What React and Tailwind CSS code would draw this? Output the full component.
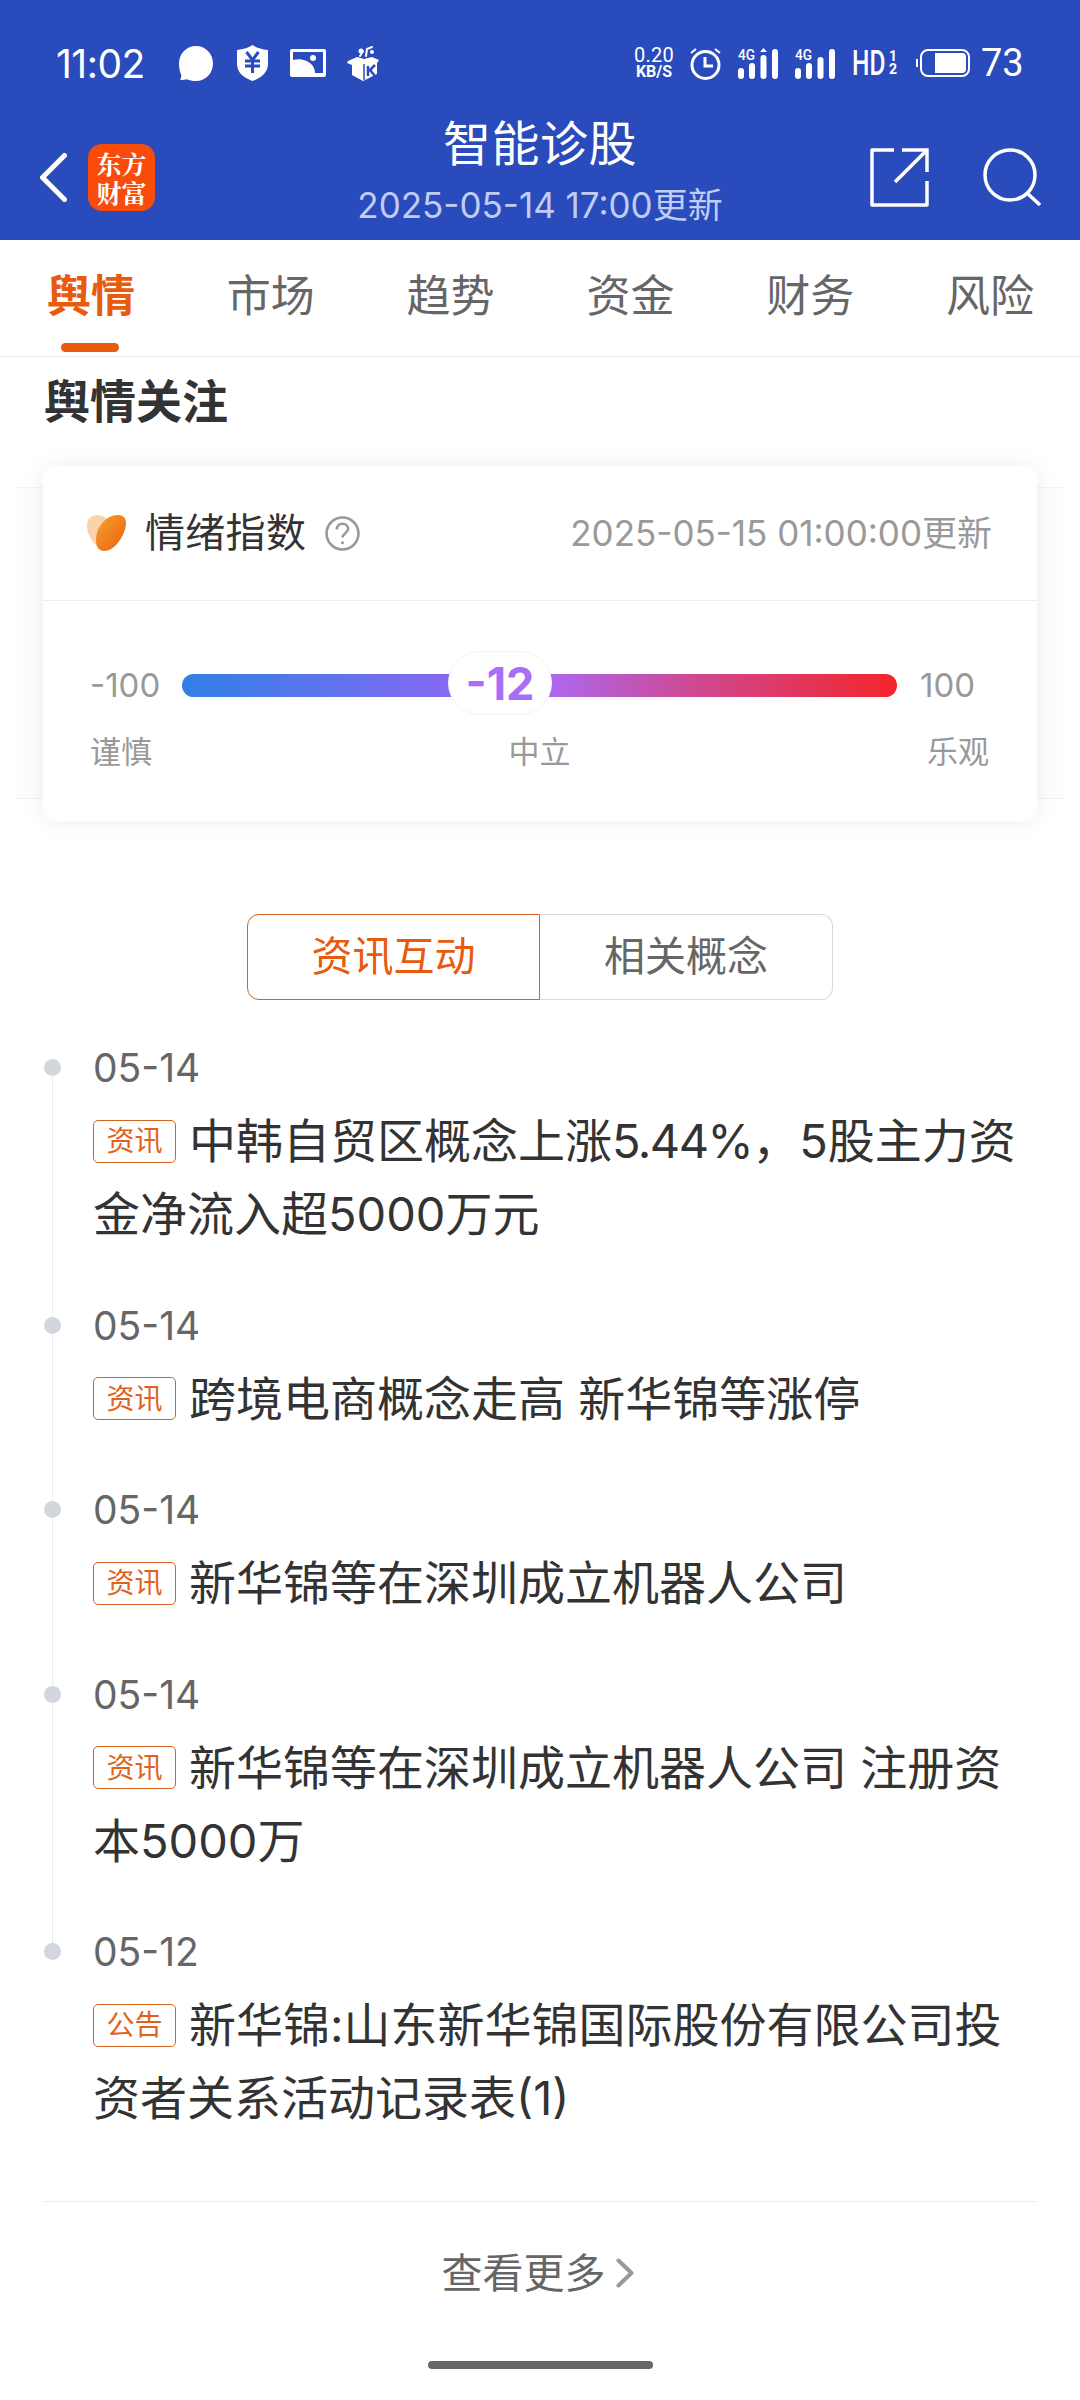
import React from 'react';

const font = "font-['Inter','Noto_Sans_CJK_SC',sans-serif]";

const tabs = ['舆情', '市场', '趋势', '资金', '财务', '风险'];

const news = [
  {
    date: '05-14',
    tag: '资讯',
    text: (
      <>
        中韩自贸区概念上涨<span className="tracking-[-1.500px]">5.44%</span>，5股主力资金净流入超5000万元
      </>
    ),
  },
  { date: '05-14', tag: '资讯', text: '跨境电商概念走高 新华锦等涨停' },
  { date: '05-14', tag: '资讯', text: '新华锦等在深圳成立机器人公司' },
  { date: '05-14', tag: '资讯', text: '新华锦等在深圳成立机器人公司 注册资本5000万' },
  { date: '05-12', tag: '公告', text: '新华锦:山东新华锦国际股份有限公司投资者关系活动记录表(1)' },
];

const Signal = ({ up }) => (
  <svg width="41" height="32" viewBox="0 0 41 32" fill="white">
    <text x="0" y="13" fontSize="15" fontWeight="500" fontFamily="Roboto" textLength="17" lengthAdjust="spacingAndGlyphs">4G</text>
    <rect x="0" y="21" width="6" height="11" rx="3" />
    <rect x="11" y="16" width="6" height="16" rx="3" />
    {up && <path d="M25.500 1l3.500 4h-7z" />}
    <rect x="22.500" y={up ? 8 : 10} width="6" height={up ? 24 : 22} rx="3" />
    <rect x="34" y="2" width="6" height="30" rx="3" />
  </svg>
);

const StatusBar = () => (
  <div className="h-[80px] pt-[47px] pl-[56px] pr-[60px] flex items-start justify-between text-white">
    <div className="flex items-center h-[32px]">
      <span className="text-[39px] leading-none w-[89px] whitespace-nowrap tracking-[-0.500px]">11:02</span>
      <svg className="ml-[34px]" width="34" height="35" viewBox="0 0 34 35" fill="white">
        <path d="M17 0C26.400 0 34 7.600 34 17.500S26.400 35 17 35c-3.500 0-6.500-.6-9.500-1.800-2 .6-4 .8-6.500.6 1-1.500 1.500-3 1.200-5C.8 26 0 21.700 0 17.500 0 7.600 7.600 0 17 0z" />
      </svg>
      <svg className="ml-[24px]" width="31" height="36" viewBox="0 0 31 36">
        <path d="M15.500 0c3.500 2.500 9 4.500 15.500 5v14c0 8-6 13.500-15.500 17C6 32.500 0 27 0 19V5c6.500-.5 12-2.500 15.500-5z" fill="white" />
        <path d="M9.500 7l6 8 6-8M8 16h15M8 21h15M15.500 15v13" stroke="#294bbc" strokeWidth="3" fill="none" />
      </svg>
      <svg className="ml-[22px]" width="36" height="28" viewBox="0 0 36 28">
        <rect width="36" height="28" rx="2" fill="white" />
        <path d="M3 3h30v21h-8c0-3-1-5-2.500-7.500C18 11 10 9 3 11z" fill="#294bbc" />
        <circle cx="23" cy="9" r="3" fill="white" />
      </svg>
      <svg className="ml-[21px]" width="33" height="36" viewBox="0 0 33 36">
        <path d="M1 16l9-4 7 2 8-2 7 3-2 3v11l-14 7-11-6V20l-5-2z" fill="white" />
        <path d="M17 19v16" stroke="#294bbc" strokeWidth="1.500" />
        <path d="M21 21v10M28 20l-5 5 5 6" stroke="#294bbc" strokeWidth="2.500" fill="none" />
        <path d="M13 11l3-5M19 11l1-7 5-2" stroke="white" strokeWidth="2" strokeLinecap="round" fill="none" />
        <circle cx="14" cy="6" r="2.500" fill="white" />
        <circle cx="25" cy="7" r="2" fill="white" />
      </svg>
    </div>
    <div className="flex items-center h-[32px]">
      <div className="flex flex-col items-center w-[42px] font-['Roboto',sans-serif]">
        <span className="text-[20px] leading-[16px] tracking-[0.300px]">0.20</span>
        <span className="text-[16px] leading-[15px] font-bold mt-[1px]">KB/S</span>
      </div>
      <svg className="ml-[14px]" width="33" height="33" viewBox="0 0 33 33" fill="none" stroke="white" strokeWidth="3">
        <circle cx="16.500" cy="18" r="13.500" />
        <path d="M16 10v9h8" />
        <path d="M2 6l5-4M31 6l-5-4" strokeWidth="2" />
      </svg>
      <div className="ml-[16px] h-[32px]"><Signal up /></div>
      <div className="ml-[16px] h-[32px]"><Signal /></div>
      <div className="ml-[16px] w-[45px] flex items-center font-['Roboto',sans-serif]">
        <span className="text-[35px] leading-none font-medium scale-x-[0.7] origin-left w-[37px]">HD</span>
        <span className="flex flex-col items-center text-[14px] leading-[13px] font-bold">
          <span>1</span>
          <span>2</span>
        </span>
      </div>
      <div className="ml-[19px] flex items-center">
        <span className="w-[2px] h-[8px] bg-white mr-[2px]" />
        <div className="w-[50px] h-[28px] rounded-[8px] border-2 border-white p-[2px] pl-[13px]">
          <div className="h-full w-full bg-white rounded-r-[4px]" />
        </div>
      </div>
      <span className="ml-[11px] w-[39px] text-[38px] leading-none font-['Roboto',sans-serif]">73</span>
    </div>
  </div>
);

const Header = () => (
  <header className="bg-[#294bbc] h-[240px]">
    <StatusBar />
    <div className="relative h-[160px] text-white">
      <div className="flex flex-col items-center pt-[36px]">
        <span className="text-[48px] leading-[56px] tracking-[0.500px]">智能诊股</span>
        <span className="text-[35px] leading-[44px] text-[#bfcdf2] mt-[11px]">2025-05-14 17:00更新</span>
      </div>
      <div className="absolute left-[40px] top-[64px] flex items-center gap-[21px]">
        <svg width="27" height="49" viewBox="0 0 27 49" fill="none" stroke="white" strokeWidth="5" strokeLinecap="round" strokeLinejoin="round">
          <path d="M24.500 2.500L2.500 24.500l22 22" />
        </svg>
        <div className="w-[67px] h-[67px] rounded-[14px] bg-[#f94b0a] flex items-center justify-center">
          <span className="text-[25px] leading-[29px] font-bold text-white text-center font-['Noto_Serif_CJK_SC','Noto_Sans_CJK_SC',sans-serif] w-[52px]">东方财富</span>
        </div>
      </div>
      <div className="absolute right-[39px] top-[68px] flex items-start gap-[54px]">
        <svg width="59" height="59" viewBox="0 0 59 59" fill="none" stroke="white" strokeWidth="3.500">
          <path d="M24 2H2v55h55V33" strokeLinejoin="round" />
          <path d="M32 2h25v22" />
          <path d="M57 2L25 34" />
        </svg>
        <svg width="58" height="58" viewBox="0 0 58 58" fill="none" stroke="white" strokeWidth="3.500">
          <circle cx="27" cy="27" r="25" />
          <path d="M44 45l13 12" />
        </svg>
      </div>
    </div>
  </header>
);

const Tabs = () => (
  <nav className="h-[117px] border-b border-[#ececec] flex justify-between pl-[47px] pr-[46px]">
    {tabs.map((tab, i) => (
      <div key={tab} className="relative pt-[26px]">
        <span className={`text-[44px] leading-[60px] ${i === 0 ? 'font-bold text-[#e85a0c]' : 'text-[#666666]'}`}>{tab}</span>
        {i === 0 && <div className="absolute left-[14px] bottom-[4px] w-[58px] h-[9px] rounded-full bg-[#e85a0c]" />}
      </div>
    ))}
  </nav>
);

const SentimentCard = () => (
  <div className="mx-[15px] mt-[58px] h-[312px] border-y border-[#f3f3f3] bg-[#fdfdfd]">
    <section className="mx-[28px] -mt-[22px] h-[355px] bg-white rounded-[14px] shadow-[0_0_24px_rgba(0,0,0,0.07)]">
      <div className="h-[135px] flex items-center justify-between pl-[44px] pr-[45px] border-b border-[#eeeeee]">
        <div className="flex items-center">
          <svg width="39" height="36" viewBox="0 0 39 36">
            <defs>
              <linearGradient id="leaf" x1="0" y1="0" x2="1" y2="1">
                <stop offset="0" stopColor="#f5a22e" />
                <stop offset="1" stopColor="#ec5f0c" />
              </linearGradient>
            </defs>
            <path d="M10 0C4 0 0 4 0 11c0 9 7 19 15 25 4 0 8-2 10-6L22 6C19 2 15 0 10 0z" fill="#fbd3a9" />
            <path d="M31 0C19 0 9 12 9 25c0 7 3 11 8 11C29 36 39 18 39 8c0-5-3-8-8-8z" fill="url(#leaf)" />
          </svg>
          <span className="ml-[19px] text-[40px] tracking-[0.300px] leading-none text-[#333333]">情绪指数</span>
          <svg className="ml-[19px]" width="35" height="35" viewBox="0 0 34 34" fill="none" stroke="#999999" strokeWidth="2.500">
            <circle cx="17" cy="17" r="15.500" />
            <path d="M11.500 13c0-3.500 2.500-5.500 5.500-5.500s5.500 2 5.500 5c0 4-5.500 4.500-5.500 8.500" />
            <circle cx="17" cy="26" r="1.500" fill="#999999" stroke="none" />
          </svg>
        </div>
        <span className="text-[35px] leading-none text-[#999999]">2025-05-15 01:00:00更新</span>
      </div>
      <div className="pt-[66px] pl-[47px] pr-[48px]">
        <div className="flex items-center h-[37px]">
          <span className="w-[92px] text-[33px] text-[#999999] leading-none">-100</span>
          <div className="relative w-[715px] h-[23px] shrink-0 rounded-full bg-[linear-gradient(90deg,#3080e4_0%,#8c68f2_40%,#a96af5_50%,#cf4890_72%,#f3252a_100%)]">
            <div className="absolute left-[266px] -top-[23px] w-[104px] h-[64px] rounded-full bg-white border border-[#f4f4f4] flex items-center justify-center">
              <span className="text-[45px] leading-none font-bold text-[#a86ef7]">-12</span>
            </div>
          </div>
          <span className="ml-[23px] text-[33px] text-[#999999] leading-none">100</span>
        </div>
        <div className="flex justify-between mt-[28px] text-[31px] leading-[40px] text-[#999999]">
          <span>谨慎</span>
          <span>中立</span>
          <span>乐观</span>
        </div>
      </div>
    </section>
  </div>
);

const Switcher = () => (
  <div className="mt-[115px] flex justify-center">
    <div className="flex w-[586px] h-[86px] text-[41px]">
      <div className="w-[293px] flex items-center justify-center rounded-l-[12px] border border-[#d2641f] text-[#e85a0c]">资讯互动</div>
      <div className="flex-1 flex items-center justify-center rounded-r-[12px] border border-l-0 border-[#d9d9d9] text-[#666666]">相关概念</div>
    </div>
  </div>
);

const NewsItem = ({ item, last }) => (
  <li className="relative pl-[50px] pb-[53.500px]">
    <span className="absolute left-[1px] top-[13px] w-[17px] h-[17px] rounded-full bg-[#d2d6dd]" />
    {!last && <span className="absolute left-[9px] top-[30px] -bottom-[13px] w-px bg-[#e9ebef]" />}
    <div className="text-[39px] leading-[44px] text-[#666666]">{item.date}</div>
    <p className="mt-[14px] text-[47px] leading-[73px] text-[#333333]">
      <span className="inline-flex items-center justify-center align-[7px] w-[83px] h-[43px] rounded-[5px] border border-[#d2641f] text-[28px] leading-none text-[#e0621c] mr-[13px]">{item.tag}</span>
      {item.text}
    </p>
  </li>
);

export default function App() {
  return (
    <div className={`w-[1080px] h-[2400px] bg-white overflow-hidden flex flex-col ${font}`}>
      <Header />
      <Tabs />
      <h2 className="pl-[44px] mt-[16px] text-[46px] leading-[56px] font-bold text-[#333333]">舆情关注</h2>
      <SentimentCard />
      <Switcher />
      <ul className="mt-[46px] pl-[43px] pr-[40px]">
        {news.map((item, i) => (
          <NewsItem key={i} item={item} last={i === news.length - 1} />
        ))}
      </ul>
      <div className="mx-[43px] border-t border-[#eeeeee] mt-[13px] pt-[43px] pr-[5px] flex items-center justify-center gap-[10px] text-[41px] leading-[56px] text-[#666666]">
        查看更多
        <svg width="18" height="30" viewBox="0 0 18 30" fill="none" stroke="#999999" strokeWidth="4" strokeLinecap="round" strokeLinejoin="round">
          <path d="M2.500 2.500L15.500 15 2.500 27.500" />
        </svg>
      </div>
      <div className="mt-auto mb-[31px] self-center w-[225px] h-[8px] rounded-full bg-[#666666]" />
    </div>
  );
}
